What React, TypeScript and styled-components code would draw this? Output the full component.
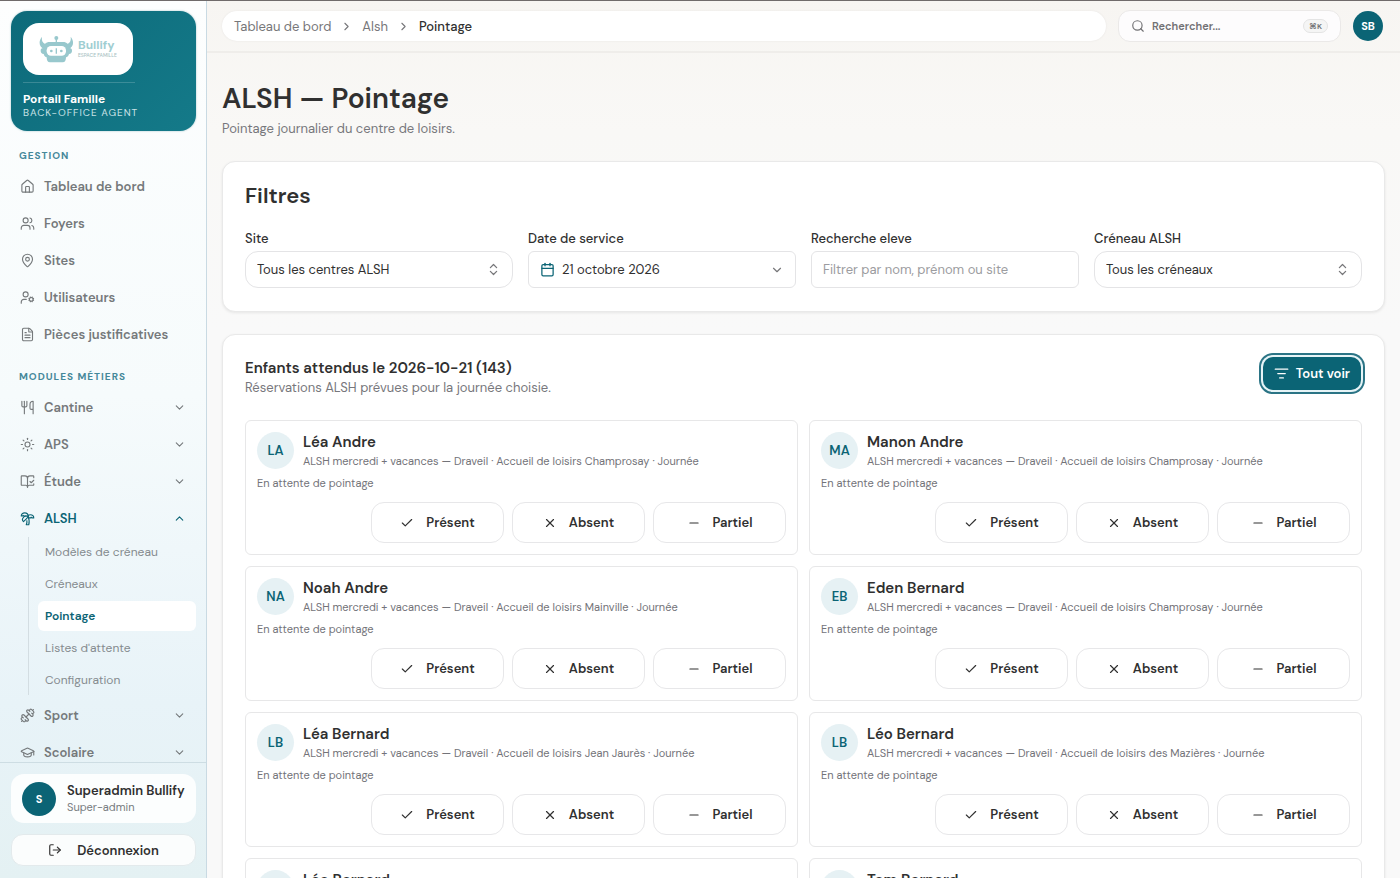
import React from "react";
import styled, { createGlobalStyle, css } from "styled-components";
import {
  House, Users, MapPin, UserCog, FileText, Utensils, Sun, BookOpenCheck, TreePalm, Dumbbell,
  GraduationCap, ChevronDown, ChevronUp, ChevronRight, ChevronsUpDown, LogOut, Search, Calendar,
  Check, X, Minus, ListFilter, type LucideIcon,
} from "lucide-react";

const teal = "#0b6475";

const GlobalStyle = createGlobalStyle`
  *, *::before, *::after { box-sizing: border-box; }
  body {
    margin: 0;
    font-family: "DM Sans", Inter, "Liberation Sans", sans-serif;
    font-size: 13px;
    color: #303030;
    background: #f9f9f9;
  }
  button, input, select { font: inherit; color: inherit; }
  h1, h2, h3, p, ul, ol { margin: 0; padding: 0; }
  ul, ol { list-style: none; }
  a { color: inherit; text-decoration: none; }
`;

const Shell = styled.div`
  display: grid;
  grid-template-columns: 207px minmax(0, 1fr);
  height: 100vh;
  overflow: hidden;
  border-top: 1px solid #706b6b;
`;

const Sidebar = styled.aside`
  display: flex;
  flex-direction: column;
  min-height: 0;
  border-right: 1px solid #c9dae3;
  background: linear-gradient(180deg, #fdfefe 0%, #f6fbfc 45%, #e8f3f8 80%, #e4f1f3 100%);
`;

const BrandCard = styled.div`
  flex: none;
  margin: 10px 10px 0 11px;
  padding: 12px 12px 11px;
  border-radius: 16px;
  color: #fff;
  background: linear-gradient(135deg, #0d6a7a, #147a89);
  box-shadow: 0 0 2px rgba(11, 100, 117, 0.4);
`;

const LogoBox = styled.div`
  display: flex;
  align-items: center;
  gap: 4px;
  width: 110px;
  height: 52px;
  padding: 0 16px;
  border-radius: 16px;
  background: #fff;
`;

const LogoText = styled.div`
  font-size: 12px;
  line-height: 14px;
  font-weight: 700;
  color: #9fced2;
`;

const LogoSub = styled.div`
  font-size: 5px;
  line-height: 8px;
  font-weight: 500;
  white-space: nowrap;
  color: #a8bfc3;
`;

const BrandText = styled.div`
  width: 112px;
  margin-top: 7px;
  padding-top: 9px;
  border-top: 1px solid rgba(255, 255, 255, 0.18);
  white-space: nowrap;
`;

const BrandName = styled.div`
  font-size: 12px;
  line-height: 14px;
  font-weight: 700;
`;

const BrandRole = styled.div`
  font-size: 10px;
  line-height: 14px;
  letter-spacing: 1px;
  color: #c9e2e6;
`;

const Nav = styled.nav`
  flex: 1;
  min-height: 0;
  overflow-y: auto;
  scrollbar-width: none;
  padding: 16px 10px 0 11px;
`;

const NavHeading = styled.h2`
  padding-left: 8px;
  font-size: 10px;
  line-height: 18px;
  font-weight: 700;
  letter-spacing: 1px;
  color: #45889a;
  ul + & { margin-top: 15px; }
`;

const NavList = styled.ul`
  padding-top: 3px;
`;

const navRow = css`
  display: flex;
  align-items: center;
  gap: 9px;
  width: 100%;
  height: 37px;
  padding: 0 10px 0 9px;
  border: 0;
  background: none;
  font-size: 13px;
  font-weight: 600;
  text-align: left;
  color: #75797b;
`;

const NavLink = styled.a`
  ${navRow}
`;

const NavToggle = styled.button<{ $active?: boolean }>`
  ${navRow}
  ${(p) => p.$active && css`color: ${teal};`}
  span { flex: 1; }
`;

const SubList = styled.ul`
  margin: 0 0 2px 17px;
  padding-left: 9px;
  border-left: 1px solid #d3dde2;
`;

const SubLink = styled.a<{ $active?: boolean }>`
  display: block;
  height: 30px;
  margin-bottom: 2px;
  padding-left: 7px;
  border-radius: 6px;
  font-size: 12px;
  line-height: 30px;
  color: #858b8f;
  ${(p) => p.$active && css`background: #fff; color: ${teal}; font-weight: 600;`}
`;

const SideFooter = styled.div`
  flex: none;
  display: grid;
  gap: 11px;
  padding: 11px 10px 12px 11px;
  border-top: 1px solid #cddde3;
`;

const UserCard = styled.div`
  display: flex;
  align-items: center;
  gap: 11px;
  height: 49px;
  padding: 0 11px;
  border-radius: 13px;
  background: rgba(255, 255, 255, 0.88);
  white-space: nowrap;
`;

const UserName = styled.div`
  font-size: 13px;
  line-height: 17px;
  font-weight: 600;
`;

const UserRole = styled.div`
  font-size: 11px;
  line-height: 16px;
  color: #777c80;
`;

const Avatar = styled.div<{ $size: number }>`
  flex: none;
  display: grid;
  place-items: center;
  width: ${(p) => p.$size}px;
  height: ${(p) => p.$size}px;
  border-radius: 50%;
  background: ${teal};
  color: #fff;
  font-size: 11px;
  font-weight: 700;
`;

const LogoutButton = styled.button`
  display: flex;
  align-items: center;
  justify-content: center;
  gap: 15px;
  height: 32px;
  padding: 0 8px;
  border: 1px solid #e3eaec;
  border-radius: 12px;
  background: #fbfdfd;
  font-weight: 600;
`;

const Main = styled.div`
  min-width: 0;
  overflow-y: auto;
  scrollbar-width: none;
  background: linear-gradient(180deg, #f7f5f2 0, #f9f8f6 130px, #f9f9f9 330px);
`;

const TopBar = styled.header`
  display: flex;
  align-items: center;
  gap: 12px;
  height: 52px;
  padding: 0 17px 0 15px;
  border-bottom: 2px solid #efedea;
`;

const Crumbs = styled.nav`
  flex: 1;
  height: 30px;
  padding: 0 12px;
  border-radius: 15px;
  background: #fff;
  box-shadow: 0 0 2px #e5e3e1;
  font-size: 13px;
  ol { display: flex; align-items: center; gap: 9px; height: 100%; }
  li { display: flex; align-items: center; gap: 9px; color: #77777a; }
  li[aria-current] { color: #303030; font-weight: 500; }
`;

const SearchButton = styled.button`
  display: flex;
  align-items: center;
  gap: 7px;
  width: 223px;
  height: 32px;
  padding: 0 12px;
  border: 1px solid #ebe9e8;
  border-radius: 12px;
  background: #fdfcfd;
  font-size: 11px;
  font-weight: 600;
  color: #717174;
  text-align: left;
  span { flex: 1; }
`;

const Kbd = styled.kbd`
  padding: 0 5px;
  border: 1px solid #e4e4e4;
  border-radius: 7px;
  background: #f5f5f5;
  font-family: inherit;
  font-size: 8px;
  line-height: 12px;
`;

const Content = styled.main`
  padding: 27px 15px 22px;
`;

const PageTitle = styled.h1`
  font-size: 28px;
  line-height: 38px;
  font-weight: 600;
`;

const Muted = styled.p`
  font-size: 13px;
  line-height: 20px;
  color: #77777c;
  h1 + & { margin-top: 1px; }
`;

const Card = styled.section`
  padding: 20px 22px 23px;
  border: 1px solid #e9e9e9;
  border-radius: 13px;
  background: #fff;
  box-shadow: 0 1px 3px rgba(0, 0, 0, 0.08);
  margin-top: 22px;
`;

const FilterTitle = styled.h2`
  font-size: 22px;
  line-height: 28px;
  font-weight: 600;
`;

const Filters = styled.div`
  display: grid;
  grid-template-columns: repeat(4, minmax(0, 1fr));
  gap: 15px;
  margin-top: 17px;
`;

const Field = styled.div`
  position: relative;
  label { display: block; font-size: 13px; line-height: 24px; font-weight: 500; }
`;

const control = css`
  display: flex;
  align-items: center;
  gap: 7px;
  width: 100%;
  height: 37px;
  padding: 0 11px;
  border: 1px solid #e4e4e6;
  border-radius: 6px;
  background: #fff;
  font-size: 13px;
  text-align: left;
`;

const Select = styled.select`
  ${control}
  border-radius: 13px;
  appearance: none;
`;

const TextInput = styled.input`
  ${control}
  &::placeholder { color: #9c9ca0; opacity: 1; }
`;

const DateButton = styled.button`
  ${control}
  span { flex: 1; }
`;

const SelectMark = styled.span`
  position: absolute;
  right: 12px;
  bottom: 11px;
  display: flex;
  color: #77777a;
  pointer-events: none;
`;

const ListHead = styled.div`
  display: flex;
  justify-content: space-between;
  align-items: center;
`;

const ListTitle = styled.h2`
  padding-top: 3px;
  font-size: 15px;
  line-height: 20px;
  font-weight: 600;
`;

const PrimaryButton = styled.button`
  display: flex;
  align-items: center;
  gap: 7px;
  height: 33px;
  margin: 0 1px 6px 0;
  padding: 0 11px;
  border: 0;
  border-radius: 10px;
  background: ${teal};
  color: #fff;
  font-size: 13px;
  font-weight: 600;
  box-shadow: 0 0 0 2px #e6f4f7, 0 0 0 4px #2b7485;
`;

const Grid = styled.div`
  display: grid;
  grid-template-columns: repeat(2, minmax(0, 1fr));
  gap: 11px;
  margin-top: 22px;
`;

const ChildCard = styled.article`
  padding: 11px;
  border: 1px solid #e7e7e8;
  border-radius: 6px;
`;

const ChildHead = styled.div`
  display: flex;
  align-items: center;
  gap: 9px;
  height: 37px;
`;

const Initials = styled.div`
  flex: none;
  display: grid;
  place-items: center;
  width: 37px;
  height: 37px;
  border-radius: 50%;
  background: #e6f1f4;
  color: ${teal};
  font-size: 13px;
  font-weight: 600;
`;

const ChildName = styled.h3`
  font-size: 15px;
  line-height: 20px;
  font-weight: 600;
`;

const Small = styled.p`
  font-size: 11px;
  line-height: 18px;
  white-space: nowrap;
  color: #737379;
`;

const Status = styled(Small)`
  margin-top: 5px;
`;

const Actions = styled.div`
  display: flex;
  justify-content: flex-end;
  gap: 8px;
  margin-top: 10px;
`;

const ActionButton = styled.button`
  display: flex;
  align-items: center;
  justify-content: center;
  gap: 12px;
  width: 133px;
  height: 41px;
  border: 1px solid #e7e7e9;
  border-radius: 13px;
  background: #fff;
  font-size: 13px;
  font-weight: 600;
`;

const Robot = () => (
  <svg width="35" height="28" viewBox="0 0 105 84" fill="#98c8cd" aria-hidden="true">
    <circle cx="52" cy="9" r="6" />
    <path d="M50 12h4v12h-4z" />
    <path d="M9 5C-2 18-1 36 16 42l9-14C12 27 7 18 9 5ZM95 5c11 13 10 31-7 37l-9-14c13-1 18-10 16-23Z" />
    <path d="M32 21h40c12 0 18 8 19 18 6 0 8 3 8 8s-3 9-9 10c-1 6-5 9-9 10 0 9-3 15-10 15H33c-7 0-10-6-10-15-4-1-8-4-9-10-6-1-9-5-9-10s2-8 8-8c1-10 7-18 19-18Z" />
    <rect x="23" y="33" width="58" height="29" rx="13" fill="#fff" />
    <circle cx="37" cy="48" r="4" />
    <circle cx="67" cy="48" r="4" />
    <path d="M50 40h4v16h-4z" />
  </svg>
);

const links: [string, LucideIcon][] = [
  ["Tableau de bord", House],
  ["Foyers", Users],
  ["Sites", MapPin],
  ["Utilisateurs", UserCog],
  ["Pièces justificatives", FileText],
];

const modules: { label: string; icon: LucideIcon; sub?: string[] }[] = [
  { label: "Cantine", icon: Utensils },
  { label: "APS", icon: Sun },
  { label: "Étude", icon: BookOpenCheck },
  { label: "ALSH", icon: TreePalm, sub: ["Modèles de créneau", "Créneaux", "Pointage", "Listes d'attente", "Configuration"] },
  { label: "Sport", icon: Dumbbell },
  { label: "Scolaire", icon: GraduationCap },
];

const children: [string, string, string][] = [
  ["LA", "Léa Andre", "Champrosay"],
  ["MA", "Manon Andre", "Champrosay"],
  ["NA", "Noah Andre", "Mainville"],
  ["EB", "Eden Bernard", "Champrosay"],
  ["LB", "Léa Bernard", "Jean Jaurès"],
  ["LB", "Léo Bernard", "des Mazières"],
  ["LB", "Léo Bernard", "Mainville"],
  ["TB", "Tom Bernard", "Champrosay"],
];

export default function App() {
  return (
    <Shell>
      <GlobalStyle />
      <Sidebar>
        <BrandCard>
          <LogoBox>
            <Robot />
            <div>
              <LogoText>Bullify</LogoText>
              <LogoSub>ESPACE FAMILLE</LogoSub>
            </div>
          </LogoBox>
          <BrandText>
            <BrandName>Portail Famille</BrandName>
            <BrandRole>BACK-OFFICE AGENT</BrandRole>
          </BrandText>
        </BrandCard>
        <Nav aria-label="Navigation principale">
          <NavHeading>GESTION</NavHeading>
          <NavList>
            {links.map(([label, Icon]) => (
              <li key={label}>
                <NavLink href="#"><Icon size={15} strokeWidth={1.8} />{label}</NavLink>
              </li>
            ))}
          </NavList>
          <NavHeading>MODULES MÉTIERS</NavHeading>
          <NavList>
            {modules.map(({ label, icon: Icon, sub }) => (
              <li key={label}>
                <NavToggle type="button" $active={!!sub} aria-expanded={!!sub}>
                  <Icon size={15} strokeWidth={1.8} />
                  <span>{label}</span>
                  {sub ? <ChevronUp size={13} /> : <ChevronDown size={13} />}
                </NavToggle>
                {sub && (
                  <SubList>
                    {sub.map((s) => (
                      <li key={s}><SubLink href="#" $active={s === "Pointage"}>{s}</SubLink></li>
                    ))}
                  </SubList>
                )}
              </li>
            ))}
          </NavList>
        </Nav>
        <SideFooter>
          <UserCard>
            <Avatar $size={34}>S</Avatar>
            <div>
              <UserName>Superadmin Bullify</UserName>
              <UserRole>Super-admin</UserRole>
            </div>
          </UserCard>
          <LogoutButton type="button"><LogOut size={14} />Déconnexion</LogoutButton>
        </SideFooter>
      </Sidebar>
      <Main>
        <TopBar>
          <Crumbs aria-label="Fil d'Ariane">
            <ol>
              <li><a href="#">Tableau de bord</a></li>
              <li><ChevronRight size={13} /><a href="#">Alsh</a></li>
              <li aria-current="page"><ChevronRight size={13} color="#77777a" />Pointage</li>
            </ol>
          </Crumbs>
          <SearchButton type="button">
            <Search size={14} /><span>Rechercher...</span><Kbd>⌘K</Kbd>
          </SearchButton>
          <Avatar $size={30}>SB</Avatar>
        </TopBar>
        <Content>
          <PageTitle>ALSH — Pointage</PageTitle>
          <Muted>Pointage journalier du centre de loisirs.</Muted>
          <Card>
            <FilterTitle>Filtres</FilterTitle>
            <Filters>
              <Field>
                <label htmlFor="site">Site</label>
                <Select id="site"><option>Tous les centres ALSH</option></Select>
                <SelectMark><ChevronsUpDown size={15} /></SelectMark>
              </Field>
              <Field>
                <label htmlFor="date">Date de service</label>
                <DateButton id="date" type="button">
                  <Calendar size={15} color={teal} /><span>21 octobre 2026</span><ChevronDown size={14} color="#77777a" />
                </DateButton>
              </Field>
              <Field>
                <label htmlFor="search">Recherche eleve</label>
                <TextInput id="search" placeholder="Filtrer par nom, prénom ou site" />
              </Field>
              <Field>
                <label htmlFor="slot">Créneau ALSH</label>
                <Select id="slot"><option>Tous les créneaux</option></Select>
                <SelectMark><ChevronsUpDown size={15} /></SelectMark>
              </Field>
            </Filters>
          </Card>
          <Card>
            <ListHead>
              <div>
                <ListTitle>Enfants attendus le 2026-10-21 (143)</ListTitle>
                <Muted>Réservations ALSH prévues pour la journée choisie.</Muted>
              </div>
              <PrimaryButton type="button"><ListFilter size={15} />Tout voir</PrimaryButton>
            </ListHead>
            <Grid>
              {children.map(([initials, name, place], i) => (
                <ChildCard key={i}>
                  <ChildHead>
                    <Initials>{initials}</Initials>
                    <div>
                      <ChildName>{name}</ChildName>
                      <Small>ALSH mercredi + vacances — Draveil · Accueil de loisirs {place} · Journée</Small>
                    </div>
                  </ChildHead>
                  <Status>En attente de pointage</Status>
                  <Actions>
                    <ActionButton type="button"><Check size={14} />Présent</ActionButton>
                    <ActionButton type="button"><X size={14} />Absent</ActionButton>
                    <ActionButton type="button"><Minus size={14} />Partiel</ActionButton>
                  </Actions>
                </ChildCard>
              ))}
            </Grid>
          </Card>
        </Content>
      </Main>
    </Shell>
  );
}
